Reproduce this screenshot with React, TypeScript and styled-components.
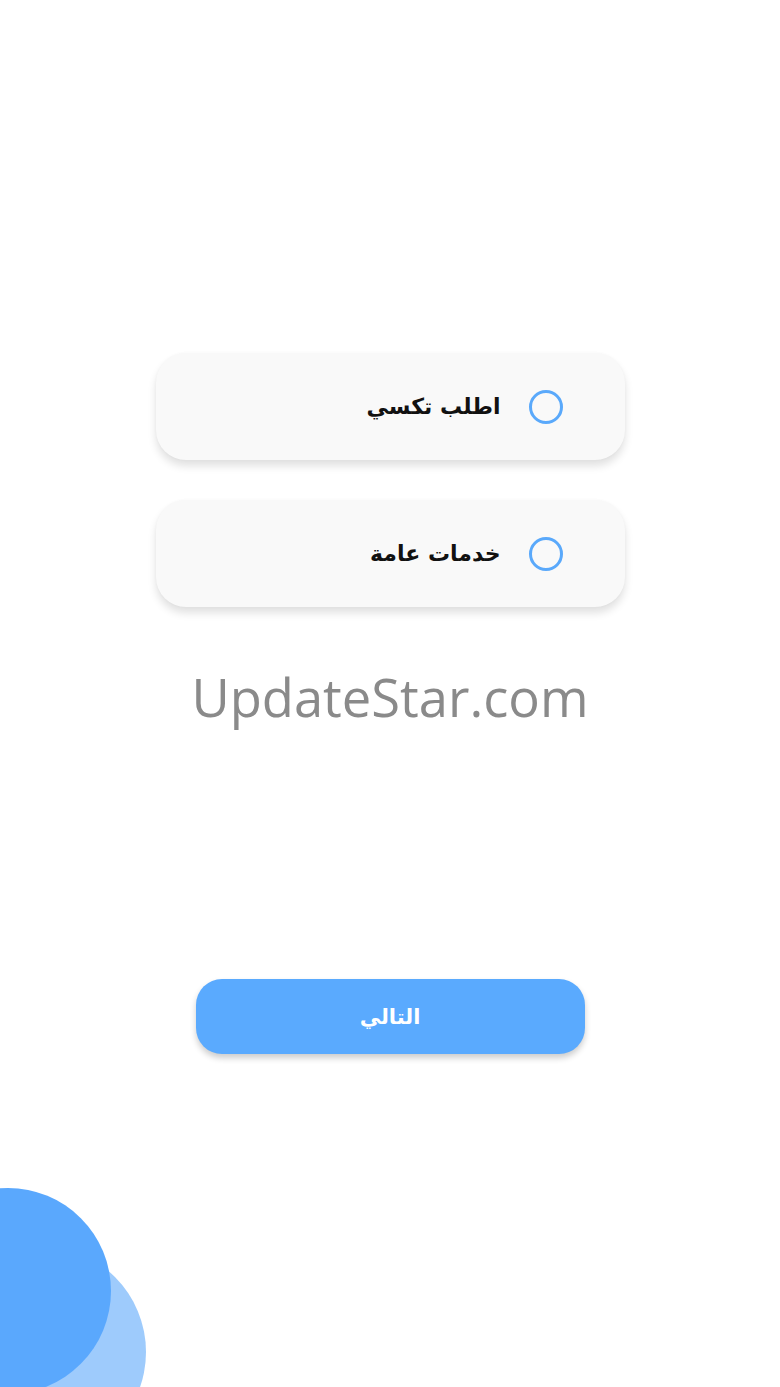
import React from 'react';
import styled, { createGlobalStyle } from 'styled-components';

const GlobalStyle = createGlobalStyle`
  html, body {
    margin: 0;
    padding: 0;
    background: #ffffff;
  }
  * { box-sizing: border-box; }
`;

const Screen = styled.div`
  position: relative;
  width: 780px;
  height: 1387px;
  overflow: hidden;
  background: #ffffff;
  display: flex;
  flex-direction: column;
  align-items: center;
  padding-top: 353px;
`;

const Options = styled.div`
  display: flex;
  flex-direction: column;
  gap: 40px;
`;

const OptionCard = styled.div`
  width: 469px;
  height: 107px;
  border-radius: 30px;
  background: #f9f9f9;
  box-shadow: 0 6px 8px rgba(0, 0, 0, 0.12), 0 0 3px rgba(0, 0, 0, 0.03);
  display: flex;
  align-items: center;
  justify-content: flex-end;
  padding-right: 62px;
  gap: 28px;
  direction: ltr;
`;

const Label = styled.span`
  font-family: "DejaVu Sans", sans-serif;
  font-weight: bold;
  font-size: 22px;
  color: #111111;
  direction: rtl;
`;

const Radio = styled.span`
  width: 34px;
  height: 34px;
  border-radius: 50%;
  border: 3px solid #5aa9fb;
  flex-shrink: 0;
`;

const Watermark = styled.div`
  margin-top: 54px;
  font-family: "Open Sans", sans-serif;
  font-size: 52.5px;
  color: #8a8a8a;
`;

const NextButton = styled.button`
  margin-top: 247px;
  width: 389px;
  height: 75px;
  border: none;
  border-radius: 26px;
  background: #5aaafe;
  box-shadow: 0 4px 6px rgba(0, 0, 0, 0.2);
  color: #ffffff;
  font-family: "DejaVu Sans", sans-serif;
  font-weight: bold;
  font-size: 21px;
  direction: rtl;
  display: flex;
  align-items: center;
  justify-content: center;
`;

const Blob = styled.div<{ $size: number; $left: number; $top: number; $color: string }>`
  position: absolute;
  width: ${p => p.$size}px;
  height: ${p => p.$size}px;
  left: ${p => p.$left}px;
  top: ${p => p.$top}px;
  border-radius: 50%;
  background: ${p => p.$color};
`;

const App = () => {
  return (
    <>
      <GlobalStyle />
      <Screen>
        <Options>
          <OptionCard>
            <Label>اطلب تكسي</Label>
            <Radio />
          </OptionCard>
          <OptionCard>
            <Label>خدمات عامة</Label>
            <Radio />
          </OptionCard>
        </Options>
        <Watermark>UpdateStar.com</Watermark>
        <NextButton>التالي</NextButton>
        <Blob $size={212} $left={-66} $top={1246} $color="#9ecbfc" />
        <Blob $size={206} $left={-95} $top={1188} $color="#5aa8fd" />
      </Screen>
    </>
  );
};

export default App;
